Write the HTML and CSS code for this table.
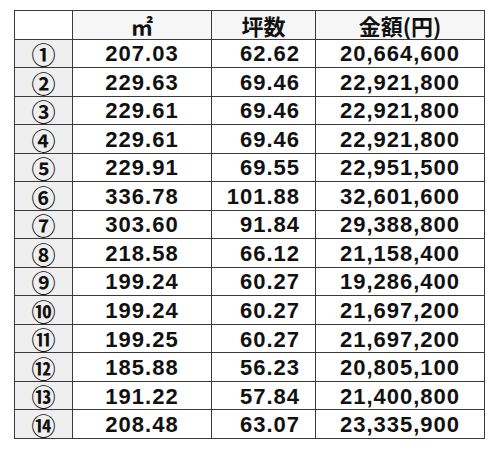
FILE: index.html
```html
<!DOCTYPE html>
<html lang="ja">
<head>
<meta charset="utf-8">
<link rel="stylesheet" href="styles.css">
</head>
<body>
<div class="page">
  <div class="grid">
    <div class="cell corner"></div>
    <div class="cell head">㎡</div>
    <div class="cell head">坪数</div>
    <div class="cell head">金額(円)</div>

    <div class="cell num">①</div><div class="cell c">207.03</div><div class="cell r">62.62</div><div class="cell c">20,664,600</div>
    <div class="cell num">②</div><div class="cell c">229.63</div><div class="cell r">69.46</div><div class="cell c">22,921,800</div>
    <div class="cell num">③</div><div class="cell c">229.61</div><div class="cell r">69.46</div><div class="cell c">22,921,800</div>
    <div class="cell num">④</div><div class="cell c">229.61</div><div class="cell r">69.46</div><div class="cell c">22,921,800</div>
    <div class="cell num">⑤</div><div class="cell c">229.91</div><div class="cell r">69.55</div><div class="cell c">22,951,500</div>
    <div class="cell num">⑥</div><div class="cell c">336.78</div><div class="cell r">101.88</div><div class="cell c">32,601,600</div>
    <div class="cell num">⑦</div><div class="cell c">303.60</div><div class="cell r">91.84</div><div class="cell c">29,388,800</div>
    <div class="cell num">⑧</div><div class="cell c">218.58</div><div class="cell r">66.12</div><div class="cell c">21,158,400</div>
    <div class="cell num">⑨</div><div class="cell c">199.24</div><div class="cell r">60.27</div><div class="cell c">19,286,400</div>
    <div class="cell num">⑩</div><div class="cell c">199.24</div><div class="cell r">60.27</div><div class="cell c">21,697,200</div>
    <div class="cell num">⑪</div><div class="cell c">199.25</div><div class="cell r">60.27</div><div class="cell c">21,697,200</div>
    <div class="cell num">⑫</div><div class="cell c">185.88</div><div class="cell r">56.23</div><div class="cell c">20,805,100</div>
    <div class="cell num">⑬</div><div class="cell c">191.22</div><div class="cell r">57.84</div><div class="cell c">21,400,800</div>
    <div class="cell num">⑭</div><div class="cell c">208.48</div><div class="cell r">63.07</div><div class="cell c">23,335,900</div>
  </div>
</div>
</body>
</html>
```

FILE: styles.css
```css
html, body {
  margin: 0;
  padding: 0;
  background: #ffffff;
}
.page {
  padding: 10px 0 0 14px;
}
.grid {
  display: grid;
  grid-template-columns: 57px 138px 103px 168px;
  grid-template-rows: repeat(15, minmax(0, 1fr));
  height: 429px;
  width: 471px;
  box-sizing: border-box;
  gap: 1px;
  padding: 1px;
  background: #3a3a3a;
}
.cell {
  background: #ffffff;
  color: #111111;
  font-family: "Liberation Sans", Arial, sans-serif;
  font-weight: bold;
  font-size: 22px;
  line-height: 1.1;
  letter-spacing: 1px;
  display: flex;
  align-items: center;
  justify-content: center;
  padding-top: 2px;
  box-sizing: border-box;
  min-height: 0;
}
.corner {
  background: #ffffff;
}
.head {
  background: #f6f6f6;
  font-family: "Noto Sans CJK JP", sans-serif;
  font-size: 22px;
  line-height: 1.1;
  letter-spacing: 0;
  padding-top: 0;
}
.num {
  background: #efefef;
  font-family: "Noto Sans CJK JP", sans-serif;
  font-size: 24px;
  font-weight: 700;
  line-height: 0.9;
  letter-spacing: 0;
  padding-top: 1px;
}
.c {
  justify-content: center;
}
.r {
  justify-content: flex-end;
  padding-right: 15px;
}
```
